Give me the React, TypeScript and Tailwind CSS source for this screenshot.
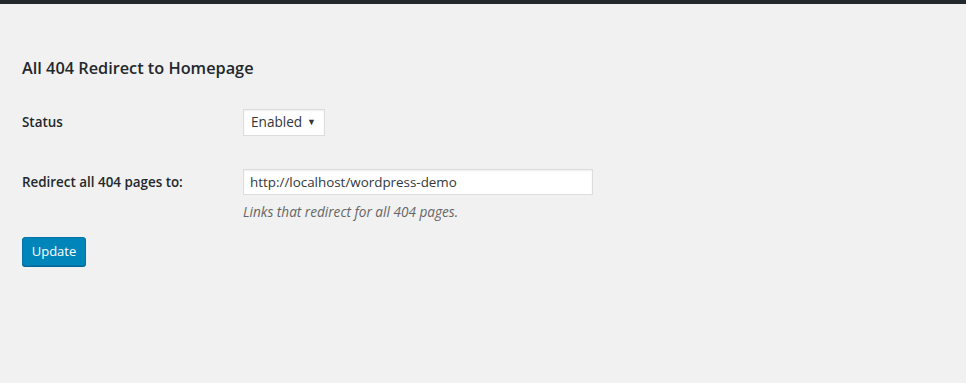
import { useState } from 'react';

export default function App() {
  const [status, setStatus] = useState('enabled');
  const [url, setUrl] = useState('http://localhost/wordpress-demo');

  return (
    <div className="min-h-[383px] bg-[#f1f1f1] font-['Open_Sans',sans-serif] text-[#23282d]">
      <div className="h-[4px] bg-[#23282d]" />
      <div className="pl-[22px] pt-[52px]">
        <h1 className="text-[16.3px] font-semibold leading-[24px]">All 404 Redirect to Homepage</h1>

        <div className="mt-[29px] flex items-center">
          <label className="w-[221px] text-[13.4px] font-semibold">Status</label>
          <div className="relative">
            <select
              value={status}
              onChange={(e) => setStatus(e.target.value)}
              className="h-[27px] w-[82px] appearance-none border border-[#ddd] bg-white pl-[7px] text-[13.6px] text-[#32373c] shadow-[inset_0_1px_2px_rgba(0,0,0,0.07)] outline-none"
            >
              <option value="enabled">Enabled</option>
              <option value="disabled">Disabled</option>
            </select>
            <span className="pointer-events-none absolute right-[9px] top-[8px] text-[9px] leading-none text-[#32373c]">▼</span>
          </div>
        </div>

        <div className="mt-[33px] flex items-start">
          <label className="w-[221px] pt-[3px] text-[13.4px] font-semibold leading-[20px]">Redirect all 404 pages to:</label>
          <div>
            <input
              value={url}
              onChange={(e) => setUrl(e.target.value)}
              className="h-[26px] w-[350px] border border-[#ddd] bg-white px-[6px] text-[13.4px] text-[#32373c] shadow-[inset_0_1px_2px_rgba(0,0,0,0.07)] outline-none"
            />
            <p className="mt-[8px] text-[13.6px] italic leading-[18px] text-[#666]">Links that redirect for all 404 pages.</p>
          </div>
        </div>

        <button
          type="button"
          className="mt-[16px] h-[29px] w-[64px] rounded-[3px] border border-[#0073aa] bg-[#0085ba] text-[13px] text-white shadow-[0_1px_0_#006799]"
        >
          Update
        </button>
      </div>
    </div>
  );
}
